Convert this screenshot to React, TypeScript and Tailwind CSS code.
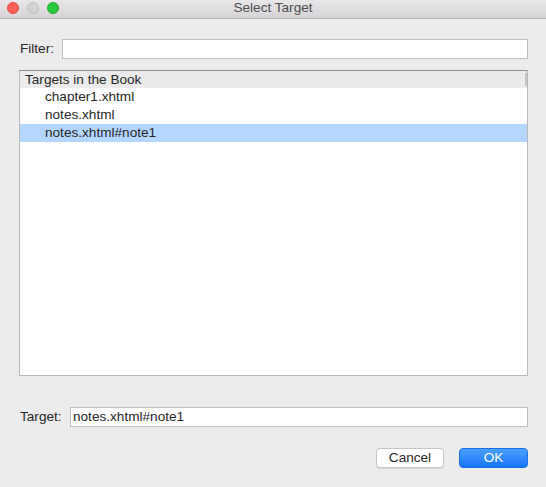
import React from "react";

const rows = ["chapter1.xhtml", "notes.xhtml", "notes.xhtml#note1"];

export default function App() {
  const selected = 2;

  return (
    <div className="w-[546px] h-[487px] bg-[#ececec] flex flex-col text-[13.6px] text-[#262626] font-['Liberation_Sans',Arial,sans-serif] overflow-hidden">
      {/* title bar */}
      <div className="relative h-[19px] shrink-0 bg-gradient-to-b from-[#e9e7e9] to-[#d5d3d5] border-b border-[#b4b4b4] flex items-center justify-center">
        <div className="absolute left-[7px] top-[2px] flex gap-[8px]">
          <span className="w-[12px] h-[12px] rounded-full bg-[#fe5f57] border border-[#e2463f]" />
          <span className="w-[12px] h-[12px] rounded-full bg-[#d3d1d3] border border-[#c2c0c2]" />
          <span className="w-[12px] h-[12px] rounded-full bg-[#28c840] border border-[#1aab29]" />
        </div>
        <span className="text-[#4d4d4d] leading-none -mt-[2px]">Select Target</span>
      </div>

      <div className="flex-1 flex flex-col pl-[19px] pr-[18px]">
        {/* filter */}
        <div className="flex items-center mt-[20px] h-[20px]">
          <span className="w-[43px] pl-[1px]">Filter:</span>
          <input className="flex-1 h-[20px] bg-white border border-[#bdbdbd] outline-none px-[3px]" />
        </div>

        {/* list */}
        <div className="mt-[11px] h-[306px] bg-white border border-[#b8b8b8] border-t-[#8e8e8e] flex flex-col">
          <div className="relative h-[17px] bg-[#ebebeb] flex items-center pl-[5px] leading-none">
            Targets in the Book
            <span className="absolute right-[0px] top-[2px] w-[2px] h-[13px] bg-[#c4c4c4]" />
          </div>
          {rows.map((r, i) => (
            <div
              key={r}
              className={
                i === selected
                  ? "h-[18px] flex items-center pl-[25px] bg-[#b3d7ff] leading-none"
                  : "h-[18px] flex items-center pl-[25px] leading-none"
              }
            >
              {r}
            </div>
          ))}
        </div>

        {/* target */}
        <div className="flex items-center mt-[31px] h-[20px]">
          <span className="w-[51px] pl-[1px]">Target:</span>
          <input
            className="flex-1 h-[20px] bg-white border border-[#bdbdbd] outline-none px-[2px] text-[#262626]"
            defaultValue="notes.xhtml#note1"
          />
        </div>

        {/* buttons */}
        <div className="flex justify-end gap-[15px] mt-[21px]">
          <button className="w-[68px] h-[20px] bg-white border border-[#c6c6c6] rounded-[4px] shadow-[0_0.5px_1px_rgba(0,0,0,0.1)] leading-none">
            Cancel
          </button>
          <button className="w-[69px] h-[20px] bg-gradient-to-b from-[#4aa0fd] to-[#1772f6] border border-[#1a6fe8] rounded-[4px] text-white leading-none">
            OK
          </button>
        </div>
      </div>
    </div>
  );
}
